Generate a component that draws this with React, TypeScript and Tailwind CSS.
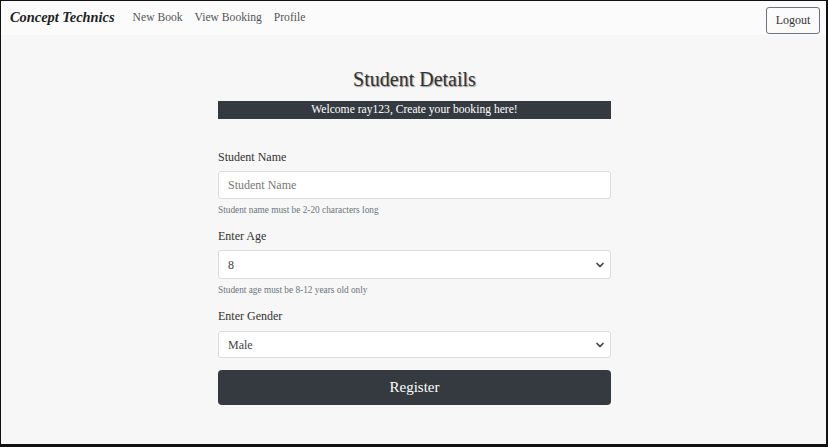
import { ChevronDown } from "lucide-react";

const serif = "font-['Liberation_Serif','Times_New_Roman',serif]";

function Field({ label, help, children }: { label: string; help?: string; children: React.ReactNode }) {
  return (
    <div className="flex flex-col">
      <label className="text-[12px] leading-[18px] text-[#333]">{label}</label>
      {children}
      {help && <p className="mt-[5px] text-[9.3px] leading-[12px] text-[#6c757d]">{help}</p>}
    </div>
  );
}

function Select({ value, options, h }: { value: string; options: string[]; h: string }) {
  return (
    <div className={`relative ${h}`}>
      <select
        defaultValue={value}
        className={`h-full w-full appearance-none rounded-[3px] border border-[#dcdcdc] bg-white pl-[9px] text-[12px] text-[#444] outline-none ${serif}`}
      >
        {options.map((o) => (
          <option key={o}>{o}</option>
        ))}
      </select>
      <ChevronDown
        className="pointer-events-none absolute right-[5px] top-1/2 -translate-y-1/2 text-[#444]"
        size={12}
        strokeWidth={3.5}
      />
    </div>
  );
}

export default function App() {
  return (
    <div
      className={`flex h-[447px] w-[828px] flex-col overflow-hidden border-l border-t border-r-2 border-b-[3px] border-[#111] bg-[#f7f7f7] ${serif}`}
    >
      <nav className="flex h-[34px] shrink-0 items-center bg-[#fbfbfb] pl-[9px] pr-[6px]">
        <span className="text-[14.4px] font-bold italic text-[#222]">Concept Technics</span>
        <div className="ml-[18px] flex gap-[12px] text-[11.6px] text-[#555]">
          <a>New Book</a>
          <a>View Booking</a>
          <a>Profile</a>
        </div>
        <button className="ml-auto mt-[4px] h-[27px] w-[54px] rounded-[3px] border border-[#6c757d] text-[12px] text-[#333]">
          Logout
        </button>
      </nav>

      <main className="flex flex-col items-center pl-[2px]">
        <h1 className="mt-[31px] text-[20px] leading-[26px] text-[#333] [text-shadow:1px_1px_1px_#999]">
          Student Details
        </h1>
        <div className="mt-[9px] flex h-[18px] w-[393px] items-center justify-center bg-[#343a40] text-[11.6px] text-white">
          Welcome ray123, Create your booking here!
        </div>

        <form className="mt-[29px] flex w-[393px] flex-col">
          <Field label="Student Name" help="Student name must be 2-20 characters long">
            <input
              placeholder="Student Name"
              className={`mt-[5px] h-[28px] rounded-[3px] border border-[#dcdcdc] bg-white pl-[9px] text-[12px] outline-none placeholder:text-[#777] ${serif}`}
            />
          </Field>
          <div className="mt-[11px]">
            <Field label="Enter Age" help="Student age must be 8-12 years old only">
              <div className="mt-[5px]">
                <Select value="8" options={["8", "9", "10", "11", "12"]} h="h-[29px]" />
              </div>
            </Field>
          </div>
          <div className="mt-[11px]">
            <Field label="Enter Gender">
              <div className="mt-[6px]">
                <Select value="Male" options={["Male", "Female"]} h="h-[27px]" />
              </div>
            </Field>
          </div>
          <button
            type="button"
            className="mt-[12px] h-[35px] rounded-[4px] bg-[#343a40] text-[15px] text-white"
          >
            Register
          </button>
        </form>
      </main>
    </div>
  );
}
